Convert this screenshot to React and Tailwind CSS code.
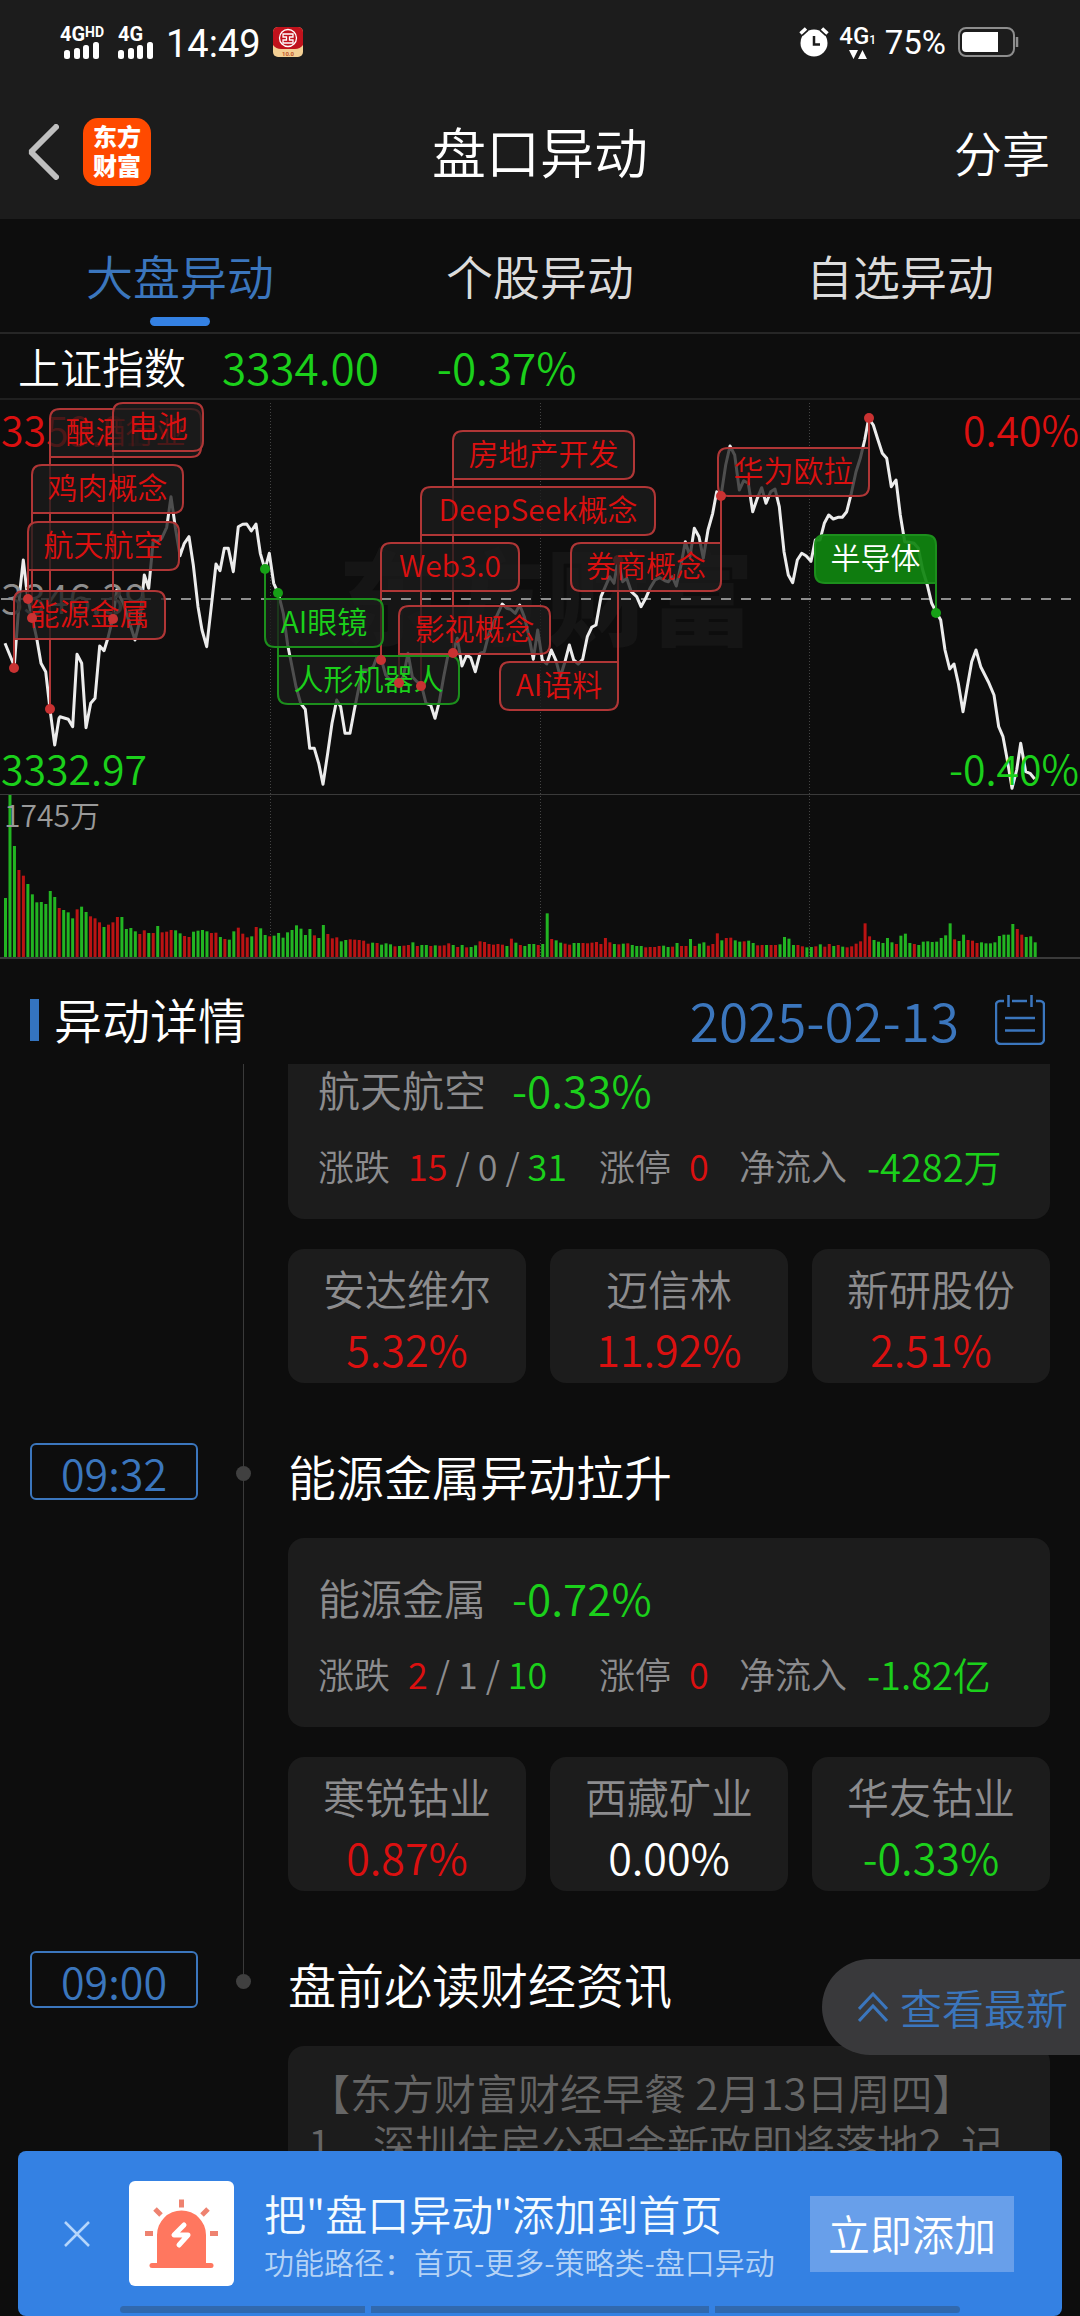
import { useLayoutEffect, useRef } from "react";

const RED = "#db1010";
const GREEN = "#1bd01b";

/* Price samples: horizontal origin followed by x,y pairs, three units per chart pixel. */
const PRICE_SEGMENTS = [
  [0, "15,760 43,828 60,600 70,510 83,625 97,685 110,745 123,820 137,845 150,958 164,1065 177,985 180,980 205,988 218,1010 231,793 245,820 258,1013 272,940 285,925 299,768 312,782 325,740 338,686 350,600 370,640 405,750 420,690 433,555 446,595 460,450 472,455 485,445 500,412 513,320 527,420 540,497 553,460 567,440 580,525 594,650 606,720 620,770 634,650 648,522 660,542 673,475 685,475 700,545 715,410 728,403 740,402 754,423 768,402 781,490 795,538 808,490 821,580 835,610 850,670 863,765 875,825 888,890 902,940 916,958 929,1075 943,1075 956,1120 969,1183 983,1090 996,1000 1010,930"],
  [720, "302,950 315,1030 330,1030 343,960 357,890 370,840 384,840 400,830 411,800 424,808 437,855 450,870 477,878 490,860 504,790 517,860 531,875 545,888 558,940 572,945 585,985 598,935 611,860 624,795 638,790 652,745 666,828 680,795 692,803 706,845 720,790 733,785 747,730 760,700 787,642 800,655 812,658 826,670 839,645 853,680 866,735 880,808 893,720 907,810 920,822 934,780 948,812 961,860 975,815 988,765 1001,810 1015,822 1028,808 1042,740 1055,712 1068,705 1083,620 1096,590 1109,560 1122,580 1134,510 1148,575 1160,565 1174,605 1190,620 1203,650"],
  [1920, "17,625 30,595 45,570 60,563 75,572 85,575 97,560 109,588 122,530 136,455 150,500 163,415 177,440 190,505 204,420 218,370 230,305 243,318 257,225 270,168 284,195 298,300 311,272 325,280 338,365 352,325 365,293 378,340 392,305 405,297 418,350 432,485 445,555 458,578 472,510 485,490 498,497 513,514 526,450 540,450 553,400 566,375 580,387 594,382 607,382 620,365 634,310 648,245 661,205 674,150 686,85 700,105 714,150 727,190 740,205 754,290 768,270 781,375 794,455 808,457 822,460 835,475 848,540 862,585 875,640 888,665 902,690 915,780 929,837 942,822 955,880 969,965 982,890 995,815 1008,780 1022,830 1045,875 1062,915 1076,1010 1089,1040 1102,1110 1116,1195 1130,1140 1142,1060 1157,1145 1170,1150 1184,1167"],
];

const PRICE_LINE = PRICE_SEGMENTS.flatMap(([origin, points]) =>
  points.split(" ").map((pair) => {
    const [x, y] = pair.split(",").map(Number);
    return `${((x + origin) / 3).toFixed(1)},${(y / 3 - 10).toFixed(1)}`;
  })
).join(" ");

/* One bar per minute: distance from the panel's ceiling, then g (down) or r (up). */
const VOLUME =
  "354g 45g 198g 270r 287r 312g 343g 367g 366g 372g 333g 351g 384r 390g 397g 415g 388r 380g 396g 409r 415r 427r 441g 434r 427r 411r 411g 447g 444g 454g 462r 451r 459g 459r 438g 457r 455r 450r 451g 460g 468r 471r 455g 452g 450g 454g 459r 458r 471g 477r 479g 454g 443r 461r 472r 469g 441r 445g 465g 469r 467g 459g 473g 457g 450g 436g 446g 465g 447g 466r 474g 435g 462r 475r 472r 484g 480g 478r 479r 480r 482r 491r 488g 489r 494g 490g 493g 499r 498g 497r 495r 487g 498r 495g 495g 498r 496g 497r 496r 490r 495g 501r 495g 502r 501g 496g 484r 486r 492r 494r 492r 494r 498g 476r 488g 495r 498g 492g 492g 495r 492g 400g 477r 481g 488g 491r 494r 489g 489g 489r 490r 488r 486r 492r 474r 487r 492g 493r 491g 490r 495g 498g 498g 502r 501r 501r 498r 497g 501g 500r 489g 498r 498r 477g 498r 491g 487g 497r 492r 460r 481g 474r 473r 481g 485g 484r 482g 489g 496r 495r 495g 495r 495r 493g 471g 476g 495g 495r 499r 502g 501g 499r 493g 500r 492r 498g 495r 500g 502r 499r 491r 484r 430r 469r 480g 485g 489g 474g 487g 492r 467g 461g 489g 492r 495g 485g 484g 486g 485g 474g 466g 430g 478r 483g 464g 480r 482r 489r 487g 490g 490g 487g 468g 464g 464g 432g 447r 464r 471g 469g 487g".split(" ");

/* anchor: corner of the box its leader line leaves from; dot: the moment on the price line. */
const EVENTS = [
  { text: "酿酒行业", x: 50, y: 9, w: 151, anchor: "bl", dot: 309 },
  { text: "电池", x: 113, y: 3, w: 90, anchor: "bl", dot: 219 },
  { text: "鸡肉概念", x: 32, y: 65, w: 151, anchor: "bl", dot: 218 },
  { text: "航天航空", x: 28, y: 122, w: 151, anchor: "bl", dot: 199 },
  { text: "能源金属", x: 14, y: 191, w: 151, anchor: "bl", dot: 268 },
  { text: "AI眼镜", x: 265, y: 199, w: 118, anchor: "tl", dot: 169, down: true },
  { text: "人形机器人", x: 278, y: 256, w: 181, anchor: "tl", dot: 193, down: true },
  { text: "房地产开发", x: 453, y: 31, w: 181, anchor: "bl", dot: 253 },
  { text: "DeepSeek概念", x: 421, y: 87, w: 234, anchor: "bl", dot: 286 },
  { text: "Web3.0", x: 381, y: 143, w: 138, anchor: "bl", dot: 260 },
  { text: "影视概念", x: 399, y: 206, w: 151, anchor: "bl", dot: 283 },
  { text: "AI语料", x: 500, y: 262, w: 118, anchor: "tr", dot: 160, behind: true },
  { text: "券商概念", x: 571, y: 143, w: 150, anchor: "tr", dot: 96 },
  { text: "华为欧拉", x: 718, y: 48, w: 151, anchor: "tr", dot: 18 },
  { text: "半导体", x: 815, y: 135, w: 121, anchor: "br", dot: 213, down: true, solid: true },
];

const BOX_H = 48;

function boxPath({ x, y, w, anchor }) {
  const r = (corner) => (corner === anchor ? 0 : 10);
  const tl = r("tl");
  const tr = r("tr");
  const br = r("br");
  const bl = r("bl");
  return `M${x + tl} ${y}H${x + w - tr}q${tr} 0 ${tr} ${tr}V${y + BOX_H - br}q0 ${br} ${-br} ${br}H${x + bl}q${-bl} 0 ${-bl} ${-bl}V${y + tl}q0 ${-tl} ${tl} ${-tl}z`;
}

const anchorX = (e) => (e.anchor.endsWith("l") ? e.x : e.x + e.w);
const anchorY = (e) => (e.anchor.startsWith("t") ? e.y : e.y + BOX_H);
const lineColor = (e) => (e.down ? "#1c8f1c" : "#b03636");

function Dot({ event }) {
  return <circle cx={anchorX(event)} cy={event.dot} r="5" fill={event.down ? "#16a016" : "#c93232"} />;
}

function MarketChart() {
  return (
    <svg viewBox="0 0 1080 560" className="block w-full" role="img" aria-label="上证指数分时走势">
      <text x="546" y="238" textAnchor="middle" fontSize="104" fontWeight="900" fill="#151515">东方财富</text>
      {[270, 540, 809].map((x) => (
        <line key={x} x1={x + 0.5} x2={x + 0.5} y1="3" y2="557" stroke="#444444" strokeDasharray="1 2" />
      ))}
      <line x1="0" x2="1080" y1="394.5" y2="394.5" stroke="#3a3a3a" />
      <line x1="1" x2="1075" y1="199" y2="199" stroke="#8e8e8e" strokeWidth="2" strokeDasharray="10 10" />

      <polyline points={PRICE_LINE} fill="none" stroke="#ececec" strokeWidth="3" strokeLinejoin="round" />

      {VOLUME.map((entry, i) => {
        const height = (531 - parseInt(entry, 10)) / 3;
        return (
          <rect
            key={i}
            x={4 + i * 4.477}
            y={557 - height}
            width="3"
            height={height}
            fill={entry.endsWith("g") ? "#22b522" : "#bb1313"}
          />
        );
      })}
      <line x1="0" x2="1080" y1="558" y2="558" stroke="#3a3a3a" strokeWidth="2" />

      <g fontSize="41">
        <text x="1" y="46" fill={RED}>3359.81</text>
        <text x="1" y="214" fill="#8e8e8e">3346.39</text>
        <text x="1" y="385" fill={GREEN}>3332.97</text>
        <text x="1079" y="46" textAnchor="end" fill={RED}>0.40%</text>
        <text x="1079" y="385" textAnchor="end" fill={GREEN}>-0.40%</text>
        <text x="4" y="427" fontSize="30" fill="#999999">1745万</text>
      </g>

      {EVENTS.map((e) => (
        <line
          key={e.text}
          x1={anchorX(e)}
          x2={anchorX(e)}
          y1={anchorY(e)}
          y2={e.dot}
          stroke={lineColor(e)}
          strokeWidth="2"
        />
      ))}
      {EVENTS.filter((e) => e.behind).map((e) => <Dot key={e.text} event={e} />)}
      {EVENTS.map((e) => (
        <g key={e.text}>
          <path
            d={boxPath(e)}
            fill={e.solid ? "#108510" : "#1b1b1b"}
            fillOpacity={e.solid ? 0.93 : 0.76}
            stroke={lineColor(e)}
            strokeWidth="2"
          />
          <text
            x={e.x + e.w / 2}
            y={e.y + 34}
            textAnchor="middle"
            fontSize="30"
            fill={e.solid ? "#ffffff" : e.down ? GREEN : RED}
          >
            {e.text}
          </text>
        </g>
      ))}
      {EVENTS.filter((e) => !e.behind).map((e) => <Dot key={e.text} event={e} />)}
    </svg>
  );
}

function SignalBars() {
  return (
    <svg viewBox="0 0 36 17" className="h-[17px] w-9" fill="#fff" aria-hidden="true">
      <rect x="0" y="8" width="6" height="9" rx="2.5" />
      <rect x="10" y="6" width="6" height="11" rx="2.5" />
      <rect x="19" y="3" width="6" height="14" rx="2.5" />
      <rect x="29" y="0" width="6" height="17" rx="2.5" />
    </svg>
  );
}

function StatusBar() {
  return (
    <div className="flex h-[84px] items-center justify-between pr-[60px] pl-[60px] font-[Roboto,sans-serif] font-normal text-white">
      <div className="flex items-center">
        <div className="flex w-[58px] flex-col">
          <span className="flex items-start text-[20px] leading-4 font-bold">
            4G<span className="text-[14px] leading-3">HD</span>
          </span>
          <span className="pl-1"><SignalBars /></span>
        </div>
        <div className="flex w-[48px] flex-col">
          <span className="text-[20px] leading-4 font-bold">4G</span>
          <SignalBars />
        </div>
        <span className="pt-1 text-[38px] leading-10">14:49</span>
        <svg viewBox="0 0 30 30" className="ml-3 size-[30px]" aria-hidden="true">
          <rect width="30" height="30" rx="5" fill="#f3cf94" />
          <path d="M0 5a5 5 0 0 1 5-5h20a5 5 0 0 1 5 5v13q-3 4-8 4H8q-5 0-8-4z" fill="#c1121c" />
          <circle cx="15" cy="11" r="8.5" fill="none" stroke="#fff" strokeWidth="1.3" />
          <path d="M10 7h10v3h-3.500v3H20v3H10v-3h3.500v-3H10z" fill="none" stroke="#fff" strokeWidth="1.300" />
          <text x="15" y="28.500" textAnchor="middle" fontSize="6" fontWeight="700" fill="#c0552c">10.0</text>
        </svg>
      </div>
      <div className="flex items-center">
        <svg viewBox="0 0 30 30" className="size-[30px]" aria-hidden="true">
          <circle cx="15" cy="16" r="13.500" fill="#fff" />
          <path d="M1.500 6.500 7 1.500M28.500 6.500 23 1.500" stroke="#1c1c1c" strokeWidth="7" />
          <path d="M1.500 6.500 7 1.500M28.500 6.500 23 1.500" stroke="#fff" strokeWidth="3.500" />
          <path d="M15 9v8.500h6" fill="none" stroke="#1c1c1c" strokeWidth="2.500" />
        </svg>
        <div className="ml-3 flex w-[34px] flex-col items-center">
          <span className="flex items-end text-[24px] leading-5 font-medium">
            4G<span className="text-[12px] leading-3">1</span>
          </span>
          <svg viewBox="0 0 18 9" className="mt-1 h-[9px] w-[18px]" fill="#fff" aria-hidden="true">
            <path d="M0 0h9L4.500 9zM9 9h9L13.500 0z" />
          </svg>
        </div>
        <span className="ml-[10px] pt-0.5 text-[33px] leading-8">75%</span>
        <svg viewBox="0 0 62 30" className="ml-3 h-[30px] w-[62px]" aria-hidden="true">
          <rect x="1" y="1" width="55" height="28" rx="7" fill="none" stroke="#8d8d8d" strokeWidth="2" />
          <path d="M8 5h32v20H8a4 4 0 0 1-4-4V9a4 4 0 0 1 4-4z" fill="#fff" />
          <path d="M59 10v10" stroke="#8d8d8d" strokeWidth="2.500" />
        </svg>
      </div>
    </div>
  );
}

function AppHeader() {
  return (
    <header className="bg-[#1c1c1c]">
      <StatusBar />
      <div className="grid h-[135px] grid-cols-[1fr_auto_1fr] items-center px-[27px]">
        <div className="flex items-center gap-6">
          <button type="button" aria-label="返回">
            <svg viewBox="0 0 32 56" className="h-[56px] w-[32px]" aria-hidden="true">
              <path d="M29 3 4 28 29 53" fill="none" stroke="#bfbfbf" strokeWidth="6" strokeLinejoin="bevel" strokeLinecap="round" />
            </svg>
          </button>
          <span className="flex size-[68px] flex-col items-center justify-center rounded-[15px] bg-[#ff4a00] pb-[3px] text-[24px] leading-[29px] font-black text-white">
            <span>东方</span>
            <span>财富</span>
          </span>
        </div>
        <h1 className="pb-0.5 text-[54px] leading-none text-white">盘口异动</h1>
        <button type="button" className="justify-self-end pr-[3px] pb-0.5 text-[48px] leading-none text-white">分享</button>
      </div>
    </header>
  );
}

function Tabs() {
  return (
    <nav className="grid h-[115px] shrink-0 grid-cols-3 border-b-2 border-[#262626] text-[47px] leading-none text-[#dcdcdc]">
      <button type="button" aria-current="page" className="flex flex-col items-center justify-between pt-8 pb-[6px] text-[#3b76bd]">
        大盘异动
        <span className="h-[9px] w-[60px] rounded-full bg-[#3481e3]" />
      </button>
      <button type="button" className="flex justify-center pt-8">个股异动</button>
      <button type="button" className="flex justify-center pt-8">自选异动</button>
    </nav>
  );
}

function CalendarIcon() {
  return (
    <svg viewBox="0 0 50 50" className="size-[50px]" fill="none" stroke="#3b76bd" strokeWidth="2.500" aria-hidden="true">
      <path d="M9 6H5a4 4 0 0 0-4 4v34a5 5 0 0 0 5 5h38a5 5 0 0 0 5-5V10a4 4 0 0 0-4-4h-4M17 6h15M13.500 0v12M36.500 0v12M10 23h30M10 35.500h30" />
    </svg>
  );
}

function Figure({ tone, children }) {
  return <span className={tone}>{children}</span>;
}

const up = "text-[#db1010]";
const down = "text-[#1bd01b]";

function SectorCard({ name, change, rise, flat, fall, inflow }) {
  return (
    <div className="rounded-2xl bg-[#1c1c1c] px-[30px] pt-[34px] pb-7 text-[#8c8c8e]">
      <div className="flex items-center text-[42px] leading-[50px]">
        {name}
        <span className={`ml-[26px] text-[44px] ${down}`}>{change}</span>
      </div>
      <div className="mt-[26px] grid grid-cols-[281px_140px_1fr] items-center text-[36px] leading-[51px] whitespace-nowrap">
        <div className="flex">
          涨跌
          <span className="ml-[18px] flex gap-2">
            <Figure tone={up}>{rise}</Figure>
            <span>/</span>
            <span>{flat}</span>
            <span>/</span>
            <Figure tone={down}>{fall}</Figure>
          </span>
        </div>
        <div className="flex">
          涨停<span className={`ml-[18px] ${up}`}>0</span>
        </div>
        <div className="flex">
          净流入<span className={`ml-5 text-[38px] ${down}`}>{inflow}</span>
        </div>
      </div>
    </div>
  );
}

function StockCard({ name, change, tone }) {
  return (
    <div className="flex h-[134px] flex-col items-center rounded-2xl bg-[#1c1c1c] pt-2 leading-[61px]">
      <span className="text-[42px] text-[#8c8c8e]">{name}</span>
      <span className={`text-[43px] ${tone}`}>{change}</span>
    </div>
  );
}

function TimelineItem({ time, title, last, children }) {
  return (
    <li className="grid grid-cols-[168px_90px_1fr]">
      {time ? (
        <time className="mt-[1px] flex h-[57px] items-center justify-center rounded-md border-2 border-[#3b76bd] pt-px text-[43px] leading-none text-[#3b76bd]">
          {time}
        </time>
      ) : (
        <span />
      )}
      <div className="flex flex-col items-center">
        {time && <span className="h-6 w-px bg-[#3a3a3a]" />}
        {time && <span className="size-[15px] rounded-full bg-[#404040]" />}
        {!last && <span className="w-px flex-1 bg-[#3a3a3a]" />}
      </div>
      <div>
        {title && <h3 className="h-[96px] text-[48px] leading-[66px] whitespace-nowrap text-white">{title}</h3>}
        {children}
      </div>
    </li>
  );
}

const ITEMS = [
  {
    id: "aerospace",
    sector: { name: "航天航空", change: "-0.33%", rise: "15", flat: "0", fall: "31", inflow: "-4282万" },
    stocks: [
      { name: "安达维尔", change: "5.32%", tone: up },
      { name: "迈信林", change: "11.92%", tone: up },
      { name: "新研股份", change: "2.51%", tone: up },
    ],
  },
  {
    id: "energy-metals",
    time: "09:32",
    title: "能源金属异动拉升",
    sector: { name: "能源金属", change: "-0.72%", rise: "2", flat: "1", fall: "10", inflow: "-1.82亿" },
    stocks: [
      { name: "寒锐钴业", change: "0.87%", tone: up },
      { name: "西藏矿业", change: "0.00%", tone: "text-white" },
      { name: "华友钴业", change: "-0.33%", tone: down },
    ],
  },
];

/* The list opens with the top edge of its first card scrolled away. */
const INITIAL_SCROLL = 34;

function Timeline() {
  const list = useRef(null);
  useLayoutEffect(() => {
    list.current.scrollTop = INITIAL_SCROLL;
  }, []);
  return (
    <ol ref={list} className="min-h-0 flex-1 overflow-y-auto px-[30px] pb-[300px] [scrollbar-width:none]">
      {ITEMS.map((item) => (
        <TimelineItem key={item.id} time={item.time} title={item.title}>
          <SectorCard {...item.sector} />
          <div className="mt-[30px] mb-[59px] grid grid-cols-3 gap-6">
            {item.stocks.map((stock) => (
              <StockCard key={stock.name} {...stock} />
            ))}
          </div>
        </TimelineItem>
      ))}
      <TimelineItem time="09:00" title="盘前必读财经资讯" last>
        <p className="rounded-2xl bg-[#1c1c1c] px-5 pt-5 pb-6 text-[42px] leading-[51px] text-[#666666]">
          【东方财富财经早餐 2月13日周四】
          <br />
          1、深圳住房公积金新政即将落地？记
        </p>
      </TimelineItem>
    </ol>
  );
}

function SirenIcon() {
  return (
    <svg viewBox="0 0 105 105" className="size-[105px] shrink-0 rounded-md bg-white" aria-hidden="true">
      <path d="M28 82V54a24.500 24.500 0 0 1 49 0v28z" fill="#ff775f" />
      <path d="M23 84.500h59" stroke="#ff775f" strokeWidth="5" strokeLinecap="round" />
      <path d="M52.500 18.500v8M26 28l6 6M79 28l-6 6M16 52.500h8M81 52.500h8" stroke="#ee8270" strokeWidth="5" />
      <path d="M55 44 45 54h14L50 64" fill="none" stroke="#fff" strokeWidth="5" strokeLinecap="round" strokeLinejoin="round" />
    </svg>
  );
}

function AddToHomeBanner() {
  return (
    <aside className="fixed inset-x-[18px] bottom-0 rounded-lg bg-[#3481e3] pt-[30px] pb-[3px]">
      <div className="flex items-center pr-[48px] pl-[46px]">
        <button type="button" aria-label="关闭" className="mr-[39px]">
          <svg viewBox="0 0 26 26" className="size-[26px]" aria-hidden="true">
            <path d="M1 1l24 24M25 1 1 25" stroke="#b5d5fb" strokeWidth="2.500" />
          </svg>
        </button>
        <SirenIcon />
        <div className="ml-[30px] flex-1 pt-0.5 whitespace-nowrap">
          <p className="text-[42px] leading-[52px] text-[#f4fbff]">把"盘口异动"添加到首页</p>
          <p className="text-[30px] leading-[44px] text-[#b5d3f6]">功能路径：首页-更多-策略类-盘口异动</p>
        </div>
        <button type="button" className="h-[76px] w-[204px] shrink-0 bg-[#689fea] pb-0.5 text-[42px] leading-none text-white">
          立即添加
        </button>
      </div>
      <div className="mt-[20px] flex gap-[6px] pr-[102px] pl-[102px]">
        <span className="h-[7px] w-[245px] rounded-l-full bg-[#3169ae]" />
        <span className="h-[7px] flex-1 bg-[#3169ae]" />
        <span className="h-[7px] w-[245px] rounded-r-full bg-[#3169ae]" />
      </div>
    </aside>
  );
}

function LatestButton() {
  return (
    <button
      type="button"
      className="fixed right-0 bottom-[261px] flex h-[96px] items-center gap-[12px] rounded-l-full bg-[#39393b] pr-[12px] pl-[36px] text-[42px] leading-none text-[#3b76bd]"
    >
      <svg viewBox="0 0 30 30" className="size-[30px]" fill="none" stroke="#3b76bd" strokeWidth="3" aria-hidden="true">
        <path d="M1 17 15 2l14 15M1 29l14-15 14 15" />
      </svg>
      <span>查看最新</span>
    </button>
  );
}

export default function App() {
  return (
    <div className="flex h-screen flex-col overflow-hidden bg-[#0d0d0d] font-['Noto_Sans_CJK_SC',sans-serif] font-[350]">
      <AppHeader />
      <Tabs />
      <section>
        <div className="flex h-[66px] items-center border-b-2 border-[#202020] pl-[18px] text-[44px] leading-none">
          <span className="text-[42px] text-white">上证指数</span>
          <span className={`ml-[36px] ${down}`}>3334.00</span>
          <span className={`ml-[58px] ${down}`}>-0.37%</span>
        </div>
        <MarketChart />
      </section>
      <div className="flex h-[104px] shrink-0 items-center justify-between px-[30px] pt-[16px]">
        <h2 className="flex items-center gap-[15px] text-[48px] leading-none text-white">
          <span className="h-[42px] w-[9px] bg-[#3474c0]" />
          <span className="pb-1">异动详情</span>
        </h2>
        <button type="button" className="flex items-center gap-[36px] pr-[5px] text-[53px] leading-none text-[#3b76bd]">
          <span className="pb-0.5">2025-02-13</span>
          <CalendarIcon />
        </button>
      </div>
      <Timeline />
      <LatestButton />
      <AddToHomeBanner />
    </div>
  );
}
